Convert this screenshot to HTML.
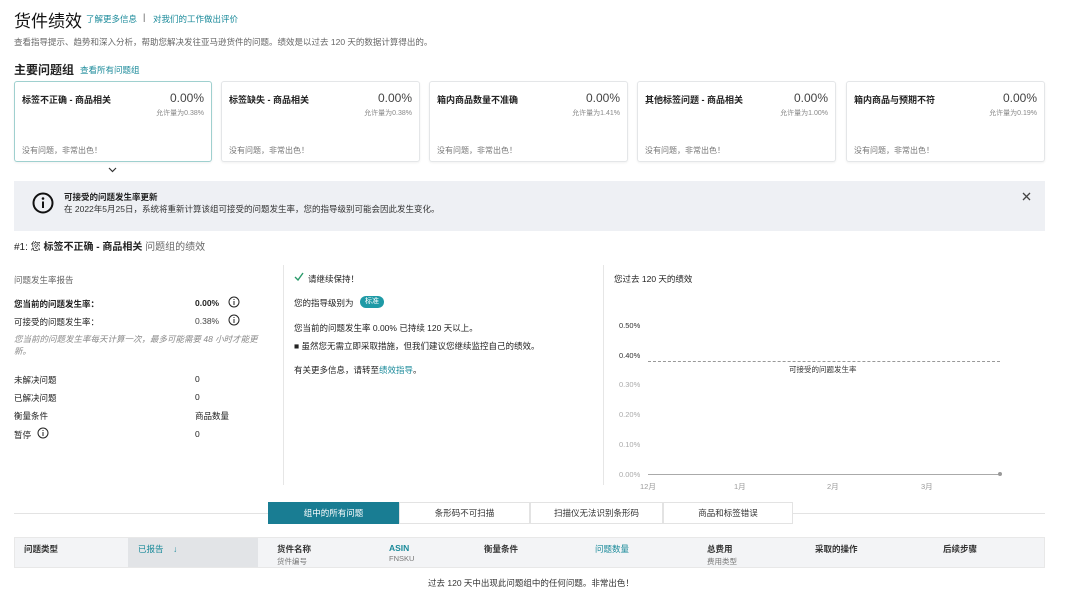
<!DOCTYPE html>
<html><head><meta charset="utf-8"><style>
*{margin:0;padding:0;box-sizing:border-box}
body{width:1080px;height:592px;background:#fff;position:relative;overflow:hidden;font-family:"Liberation Sans","Noto Sans CJK SC",sans-serif;color:#222;font-size:9px}
.a{position:absolute;white-space:nowrap}
.t{color:#1a8a9a}
.g{color:#666}
.card{position:absolute;top:81px;height:81px;border:1px solid #e4e6e8;border-radius:3px;background:#fff;box-shadow:0 1px 2px rgba(0,0,0,.06)}
.card.sel{border:1.5px solid #9fd0cf}
.card .n{position:absolute;left:7px;top:11px;font-weight:bold;font-size:9px}
.card .p{position:absolute;right:7px;top:9px;font-size:12px;color:#444}
.card .s{position:absolute;right:7px;top:26px;font-size:7px;color:#888}
.card .f{position:absolute;left:7px;top:63px;font-size:8px;color:#777}
.vl{position:absolute;width:1px;background:#e6e6e6}
.tab{position:absolute;top:502px;height:22px;border:1px solid #e3e3e3;text-align:center;line-height:21px;font-size:8.5px;color:#333;background:#fff}
.th{position:absolute;top:543px;font-size:8.5px;font-weight:bold;color:#333}
.th small{display:block;font-weight:normal;font-size:7.5px;color:#777;margin-top:1px}
</style></head><body>
<div class="a" style="left:14px;top:7px;font-size:17px;color:#111">货件绩效</div>
<div class="a t" style="left:86px;top:13px;font-size:8.5px">了解更多信息</div>
<div class="a" style="left:143px;top:12px;font-size:9px;color:#555">|</div>
<div class="a t" style="left:153px;top:13px;font-size:8.5px">对我们的工作做出评价</div>
<div class="a g" style="left:14px;top:36px;font-size:8.5px">查看指导提示、趋势和深入分析，帮助您解决发往亚马逊货件的问题。绩效是以过去 120 天的数据计算得出的。</div>
<div class="a" style="left:14px;top:61px;font-size:12px;font-weight:bold">主要问题组</div>
<div class="a t" style="left:80px;top:64px;font-size:8.5px">查看所有问题组</div>

<div class="card sel" style="left:14px;width:198px"><div class="n">标签不正确 - 商品相关</div><div class="p">0.00%</div><div class="s">允许量为0.38%</div><div class="f">没有问题，非常出色！</div></div>
<div class="card" style="left:221px;width:199px"><div class="n">标签缺失 - 商品相关</div><div class="p">0.00%</div><div class="s">允许量为0.38%</div><div class="f">没有问题，非常出色！</div></div>
<div class="card" style="left:429px;width:199px"><div class="n">箱内商品数量不准确</div><div class="p">0.00%</div><div class="s">允许量为1.41%</div><div class="f">没有问题，非常出色！</div></div>
<div class="card" style="left:637px;width:199px"><div class="n">其他标签问题 - 商品相关</div><div class="p">0.00%</div><div class="s">允许量为1.00%</div><div class="f">没有问题，非常出色！</div></div>
<div class="card" style="left:846px;width:199px"><div class="n">箱内商品与预期不符</div><div class="p">0.00%</div><div class="s">允许量为0.19%</div><div class="f">没有问题，非常出色！</div></div>
<svg class="a" style="left:108px;top:167px" width="9" height="6"><path d="M1 1l3.5 3.5L8 1" stroke="#333" stroke-width="1.2" fill="none"/></svg>

<div class="a" style="left:14px;top:181px;width:1031px;height:50px;background:#eef0f4"></div>
<svg class="a" style="left:32px;top:192px" width="22" height="22"><circle cx="11" cy="11" r="9.5" stroke="#111" stroke-width="2" fill="none"/><circle cx="11" cy="6.5" r="1.3" fill="#111"/><path d="M11 9.5v6.5" stroke="#111" stroke-width="2"/></svg>
<div class="a" style="left:64px;top:191px;font-size:8.5px;font-weight:bold">可接受的问题发生率更新</div>
<div class="a" style="left:64px;top:203px;font-size:8.5px;color:#333">在 2022年5月25日，系统将重新计算该组可接受的问题发生率，您的指导级别可能会因此发生变化。</div>
<svg class="a" style="left:1022px;top:192px" width="9" height="9"><path d="M1 1l7 7M8 1l-7 7" stroke="#444" stroke-width="1.3"/></svg>

<div class="a" style="left:14px;top:238px;font-size:10px">#1: 您 <b>标签不正确 - 商品相关</b> <span class="g">问题组的绩效</span></div>

<div class="vl" style="left:283px;top:265px;height:220px"></div>
<div class="vl" style="left:603px;top:265px;height:220px"></div>

<div class="a g" style="left:14px;top:274px;font-size:8.5px">问题发生率报告</div>
<div class="a" style="left:14px;top:298px;font-size:8.5px;font-weight:bold">您当前的问题发生率：</div>
<div class="a" style="left:195px;top:298px;font-size:8.5px;font-weight:bold">0.00%</div>
<div class="a" style="left:14px;top:316px;font-size:8.5px">可接受的问题发生率：</div>
<div class="a" style="left:195px;top:316px;font-size:8.5px;color:#444">0.38%</div>
<svg class="a" style="left:228px;top:296px" width="12" height="12"><circle cx="6" cy="6" r="5" stroke="#222" fill="none"/><path d="M6 5v4M6 3v1" stroke="#222"/></svg>
<svg class="a" style="left:228px;top:314px" width="12" height="12"><circle cx="6" cy="6" r="5" stroke="#222" fill="none"/><path d="M6 5v4M6 3v1" stroke="#222"/></svg>
<div class="a" style="left:14px;top:333px;font-size:8.5px;color:#888;font-style:italic;white-space:normal;width:255px;line-height:12px">您当前的问题发生率每天计算一次，最多可能需要 48 小时才能更新。</div>
<div class="a" style="left:14px;top:374px;font-size:8.5px">未解决问题</div><div class="a" style="left:195px;top:374px;font-size:8.5px">0</div>
<div class="a" style="left:14px;top:392px;font-size:8.5px">已解决问题</div><div class="a" style="left:195px;top:392px;font-size:8.5px">0</div>
<div class="a" style="left:14px;top:410px;font-size:8.5px">衡量条件</div><div class="a" style="left:195px;top:410px;font-size:8.5px">商品数量</div>
<div class="a" style="left:14px;top:429px;font-size:8.5px">暂停</div><div class="a" style="left:195px;top:429px;font-size:8.5px">0</div>
<svg class="a" style="left:37px;top:427px" width="12" height="12"><circle cx="6" cy="6" r="5" stroke="#222" fill="none"/><path d="M6 5v4M6 3v1" stroke="#222"/></svg>

<svg class="a" style="left:294px;top:272px" width="10" height="9"><path d="M1 5l3 3 5-7" stroke="#2a9a6a" stroke-width="1.4" fill="none"/></svg>
<div class="a" style="left:308px;top:273px;font-size:8.5px">请继续保持！</div>
<div class="a" style="left:294px;top:297px;font-size:8.5px">您的指导级别为</div>
<div class="a" style="left:360px;top:296px;width:24px;height:12px;background:#1e9aa6;border-radius:6px;color:#fff;font-size:7px;text-align:center;line-height:12px">标准</div>
<div class="a" style="left:294px;top:322px;font-size:8.5px">您当前的问题发生率 0.00% 已持续 120 天以上。</div>
<div class="a" style="left:294px;top:340px;font-size:8.5px">■ 虽然您无需立即采取措施，但我们建议您继续监控自己的绩效。</div>
<div class="a" style="left:294px;top:364px;font-size:8.5px">有关更多信息，请转至<span class="t">绩效指导</span>。</div>

<div class="a" style="left:614px;top:273px;font-size:8.5px">您过去 120 天的绩效</div>
<div class="a" style="left:619px;top:321px;font-size:7.5px;color:#333">0.50%</div>
<div class="a" style="left:619px;top:351px;font-size:7.5px;color:#333">0.40%</div>
<div class="a" style="left:619px;top:380px;font-size:7.5px;color:#aaa">0.30%</div>
<div class="a" style="left:619px;top:410px;font-size:7.5px;color:#aaa">0.20%</div>
<div class="a" style="left:619px;top:440px;font-size:7.5px;color:#aaa">0.10%</div>
<div class="a" style="left:619px;top:470px;font-size:7.5px;color:#aaa">0.00%</div>
<div class="a" style="left:648px;top:361px;width:352px;border-top:1px dashed #999"></div>
<div class="a" style="left:789px;top:364px;font-size:7.5px;color:#333">可接受的问题发生率</div>
<div class="a" style="left:648px;top:474px;width:352px;border-top:1px solid #aaa"></div>
<div class="a" style="left:998px;top:472px;width:4px;height:4px;border-radius:2px;background:#999"></div>
<div class="a" style="left:640px;top:481px;font-size:7.5px;color:#999">12月</div>
<div class="a" style="left:734px;top:481px;font-size:7.5px;color:#999">1月</div>
<div class="a" style="left:827px;top:481px;font-size:7.5px;color:#999">2月</div>
<div class="a" style="left:921px;top:481px;font-size:7.5px;color:#999">3月</div>

<div class="a" style="left:14px;top:513px;width:254px;border-top:1px solid #e3e3e3"></div>
<div class="a" style="left:793px;top:513px;width:252px;border-top:1px solid #e3e3e3"></div>
<div class="tab" style="left:268px;width:131px;background:#197d93;border-color:#197d93;color:#fff">组中的所有问题</div>
<div class="tab" style="left:399px;width:131px">条形码不可扫描</div>
<div class="tab" style="left:530px;width:133px">扫描仪无法识别条形码</div>
<div class="tab" style="left:663px;width:130px">商品和标签错误</div>

<div class="a" style="left:14px;top:537px;width:1031px;height:31px;background:#f3f4f6;border:1px solid #e8e8e8"></div>
<div class="a" style="left:128px;top:538px;width:130px;height:29px;background:#e2e4e7"></div>
<div class="th" style="left:24px">问题类型</div>
<div class="th t" style="left:138px;font-weight:normal;color:#1a8a9a">已报告 &nbsp;&nbsp;&nbsp;↓</div>
<div class="th" style="left:277px">货件名称<small>货件编号</small></div>
<div class="th" style="left:389px;color:#1a8a9a">ASIN<small>FNSKU</small></div>
<div class="th" style="left:484px">衡量条件</div>
<div class="th" style="left:595px;font-weight:normal;color:#1a8a9a">问题数量</div>
<div class="th" style="left:707px">总费用<small>费用类型</small></div>
<div class="th" style="left:815px">采取的操作</div>
<div class="th" style="left:943px">后续步骤</div>
<div class="a" style="left:428px;top:577px;font-size:8.5px;color:#333">过去 120 天中出现此问题组中的任何问题。非常出色！</div>
</body></html>
